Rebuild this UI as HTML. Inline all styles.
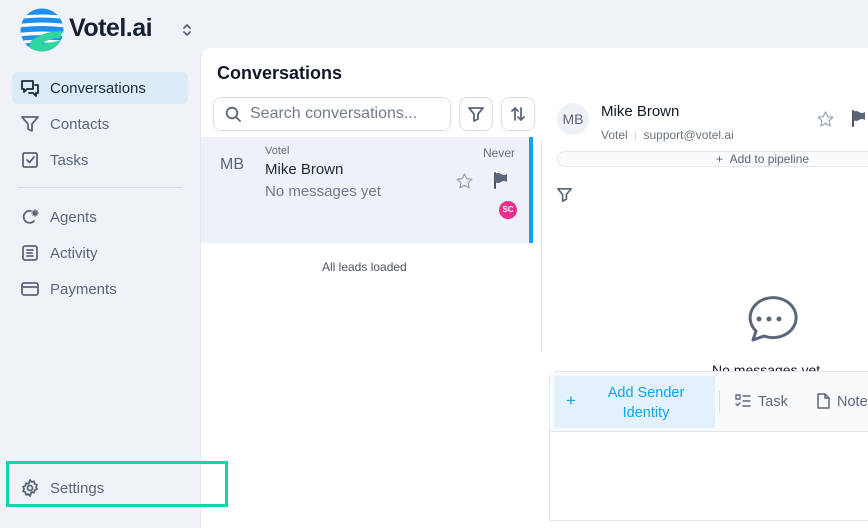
<!DOCTYPE html>
<html><head><style>
*{box-sizing:border-box;margin:0;padding:0}
body{width:868px;height:516px;overflow:hidden;background:#eff3f8;font-family:"Liberation Sans",sans-serif;position:relative;color:#1f2937}
.a{position:absolute}
.nav{position:absolute;left:12px;width:176px;height:32px;display:flex;align-items:center;font-size:15px;color:#5b6679}
.nav svg{position:absolute;left:8px}
.nav span{position:absolute;left:38px}
svg{fill:none;stroke:#5b6679;stroke-width:1.8;stroke-linecap:round;stroke-linejoin:round}
</style></head><body>
<!-- logo -->
<svg class="a" style="left:19px;top:7px" width="46" height="46" viewBox="0 0 46 46">
<defs><clipPath id="c"><circle cx="23" cy="23" r="21.5"/></clipPath></defs>
<g clip-path="url(#c)" stroke="none">
<rect x="0" y="0" width="46" height="46" fill="#1d8ff0"/>
<path d="M0 9 Q23 6 46 9 L46 12 Q23 9 0 12Z" fill="#fff"/>
<path d="M0 17 Q23 14 46 17 L46 20.5 Q23 17.5 0 20.5Z" fill="#fff"/>
<path d="M0 26 Q23 23 46 26 L46 29.5 Q23 26.5 0 29.5Z" fill="#fff"/>
<path d="M0 34 Q23 31 46 34 L46 37 Q23 34 0 37Z" fill="#fff"/>
<path d="M8 46 L12 34 Q24 24 44 24 L41 31 Q30 31 22 37 L46 33 L46 46Z" fill="#2fd6a0"/>
</g></svg>
<div class="a" style="left:69px;top:14px;font-size:25px;font-weight:bold;color:#172033;letter-spacing:-0.5px">Votel.ai</div>
<svg class="a" style="left:182px;top:23px" width="10" height="14" viewBox="0 0 10 14" style="stroke-width:1.4"><path d="M2 5l3-3 3 3M2 9l3 3 3-3"/></svg>

<div class="nav" style="top:72px;background:#dcebf8;border-radius:6px"><svg width="20" height="20" viewBox="0 0 20 20" style="stroke:#1f2937"><path d="M2 3h11v8H7l-3 3v-3H2z"/><path d="M15 7h3v8h-2v3l-3-3H9"/></svg><span style="color:#1f2937">Conversations</span></div>
<div class="nav" style="top:108px"><svg width="20" height="20" viewBox="0 0 20 20"><path d="M2 3h16l-6 7v7l-4-2v-5z"/></svg><span>Contacts</span></div>
<div class="nav" style="top:144px"><svg width="20" height="20" viewBox="0 0 20 20"><rect x="3" y="3" width="14" height="14" rx="1.5"/><path d="M7 10l2.5 2.5L14 7"/></svg><span>Tasks</span></div>
<div class="a" style="left:18px;top:187px;width:164px;height:1px;background:#d5dce6"></div>
<div class="nav" style="top:201px"><svg width="20" height="20" viewBox="0 0 20 20"><path d="M14 14a6 6 0 1 1-3-10"/><path d="M15 3v6M12 6h6M13 4l4 4M17 4l-4 4" stroke-width="1.5"/></svg><span>Agents</span></div>
<div class="nav" style="top:237px"><svg width="20" height="20" viewBox="0 0 20 20"><rect x="3" y="3" width="14" height="14" rx="2"/><path d="M7 7h6M7 10h5M7 13h6"/></svg><span>Activity</span></div>
<div class="nav" style="top:273px"><svg width="20" height="20" viewBox="0 0 20 20"><rect x="2" y="4" width="16" height="12" rx="2"/><path d="M2 8h16"/></svg><span>Payments</span></div>

<!-- main -->
<div class="a" style="left:200px;top:48px;width:680px;height:480px;background:#fff;border-radius:10px 0 0 0;border-left:1px solid #e3e8ef"></div>

<div class="nav" style="top:472px"><svg width="20" height="20" viewBox="0 0 20 20"><circle cx="10" cy="10" r="2.5"/><path d="M10 2l1.5 2 2.5-.7.6 2.5 2.4 1-1 2.2 1 2.2-2.4 1-.6 2.5-2.5-.7L10 18l-1.5-2-2.5.7-.6-2.5-2.4-1 1-2.2-1-2.2 2.4-1 .6-2.5 2.5.7z"/></svg><span>Settings</span></div>
<div class="a" style="left:6px;top:461px;width:222px;height:46px;border:3px solid #12d6a8"></div>

<div class="a" style="left:217px;top:63px;font-size:18px;font-weight:bold;color:#111827">Conversations</div>
<div class="a" style="left:213px;top:97px;width:238px;height:34px;border:1px solid #d8dee7;border-radius:8px"></div>
<svg class="a" style="left:225px;top:106px" width="17" height="17" viewBox="0 0 17 17"><circle cx="7" cy="7" r="5.3"/><path d="M11 11l4 4"/></svg>
<div class="a" style="left:250px;top:105px;font-size:16px;color:#717b8c">Search conversations...</div>
<div class="a" style="left:459px;top:97px;width:34px;height:34px;border:1px solid #d8dee7;border-radius:8px"></div>
<svg class="a" style="left:467px;top:105px" width="18" height="18" viewBox="0 0 18 18"><path d="M2 3h14l-5 6v5l-4 2V9z"/></svg>
<div class="a" style="left:501px;top:97px;width:34px;height:34px;border:1px solid #d8dee7;border-radius:8px"></div>
<svg class="a" style="left:509px;top:105px" width="18" height="18" viewBox="0 0 18 18"><path d="M6 15V3M3 6l3-3 3 3M12 3v12M9 12l3 3 3-3"/></svg>

<div class="a" style="left:201px;top:137px;width:329px;height:106px;background:#eef2f8"></div>
<div class="a" style="left:529px;top:137px;width:4px;height:106px;background:#0ea2f0"></div>
<div class="a" style="left:220px;top:156px;font-size:16px;color:#5b6679">MB</div>
<div class="a" style="left:265px;top:145px;font-size:11px;color:#6b7280">Votel</div>
<div class="a" style="left:265px;top:161px;font-size:15px;color:#1f2937">Mike Brown</div>
<div class="a" style="left:265px;top:183px;font-size:15px;color:#717b8c">No messages yet</div>
<div class="a" style="left:483px;top:146px;font-size:12px;color:#6b7280">Never</div>
<svg class="a" style="left:455px;top:172px" width="19" height="19" viewBox="0 0 20 20"><path d="M10 2l2.4 5 5.4.6-4 3.7 1.1 5.4L10 14l-4.9 2.7 1.1-5.4-4-3.7 5.4-.6z" stroke="#9aa3b2" stroke-width="1.3"/></svg>
<svg class="a" style="left:493px;top:172px" width="16" height="17" viewBox="0 0 16 17"><path d="M2 1v15" stroke="#4b5563" stroke-width="2"/><path d="M2 2Q5 0 8 2T14 2v8Q11 8 8 10T2 10z" fill="#5b6679" stroke="none"/></svg>
<div class="a" style="left:499px;top:201px;width:18px;height:18px;border-radius:50%;background:#ec2f8e;color:#fff;font-size:8px;font-weight:bold;text-align:center;line-height:18px">SC</div>
<div class="a" style="left:322px;top:260px;font-size:12px;color:#4b5563">All leads loaded</div>

<div class="a" style="left:541px;top:140px;width:1px;height:212px;background:#e3e8ef"></div>
<div class="a" style="left:557px;top:103px;width:32px;height:32px;border-radius:50%;background:#eef2f8;color:#5b6679;font-size:14px;text-align:center;line-height:32px">MB</div>
<div class="a" style="left:601px;top:103px;font-size:15px;color:#111827">Mike Brown</div>
<div class="a" style="left:601px;top:128px;font-size:12px;color:#6b7280">Votel <span style="color:#d1d5db;margin:0 3px">|</span> support@votel.ai</div>
<svg class="a" style="left:816px;top:110px" width="19" height="19" viewBox="0 0 20 20"><path d="M10 2l2.4 5 5.4.6-4 3.7 1.1 5.4L10 14l-4.9 2.7 1.1-5.4-4-3.7 5.4-.6z" stroke="#9aa3b2" stroke-width="1.3"/></svg>
<svg class="a" style="left:851px;top:110px" width="16" height="17" viewBox="0 0 16 17"><path d="M2 1v15" stroke="#4b5563" stroke-width="2"/><path d="M2 2Q5 0 8 2T14 2v8Q11 8 8 10T2 10z" fill="#5b6679" stroke="none"/></svg>
<div class="a" style="left:557px;top:151px;width:330px;height:16px;border:1px solid #e3e8ef;border-radius:8px;background:#f8fafc"></div>
<div class="a" style="left:716px;top:152px;font-size:12px;color:#5b6679">+ &nbsp;Add to pipeline</div>
<svg class="a" style="left:556px;top:186px" width="17" height="17" viewBox="0 0 18 18"><path d="M2 3h14l-5 6v5l-4 2V9z"/></svg>
<svg class="a" style="left:742px;top:295px;stroke-width:3" width="56" height="50" viewBox="0 0 56 50"><path d="M11 45l3-9A23 20 0 1 1 22 41z"/><circle cx="17" cy="24" r="1" fill="#5b6679"/><circle cx="27" cy="24" r="1" fill="#5b6679"/><circle cx="37" cy="24" r="1" fill="#5b6679"/></svg>
<div class="a" style="left:712px;top:362px;font-size:14px;color:#111827">No messages yet</div>

<div class="a" style="left:549px;top:371px;width:330px;height:150px;background:#fff;border:1px solid #e3e8ef;border-radius:8px 0 0 0"></div>
<div class="a" style="left:550px;top:372px;width:320px;height:60px;background:#f8fafc;border-bottom:1px solid #e3e8ef"></div>
<div class="a" style="left:554px;top:376px;width:161px;height:52px;background:#e2f1fc"></div>
<div class="a" style="left:566px;top:391px;font-size:17px;color:#0ea5f0">+</div>
<div class="a" style="left:596px;top:383px;width:100px;text-align:center;font-size:14.5px;line-height:20px;color:#0ea5f0">Add Sender Identity</div>
<div class="a" style="left:719px;top:391px;width:1px;height:22px;background:#d8dee7"></div>
<svg class="a" style="left:735px;top:394px;stroke-width:1.4" width="16" height="14" viewBox="0 0 16 14"><rect x="1" y="1" width="4" height="4"/><path d="M1 10l1.5 1.5L5 9M8 2h7M8 7h7M8 12h7"/></svg>
<div class="a" style="left:758px;top:394px;font-size:14.5px;color:#5b6679">Task</div>
<svg class="a" style="left:816px;top:393px;stroke-width:1.5" width="14" height="16" viewBox="0 0 14 16"><path d="M2 1h7l4 4v10H2z"/><path d="M9 1v4h4"/></svg>
<div class="a" style="left:837px;top:394px;font-size:14.5px;color:#5b6679">Note</div>
</body></html>
